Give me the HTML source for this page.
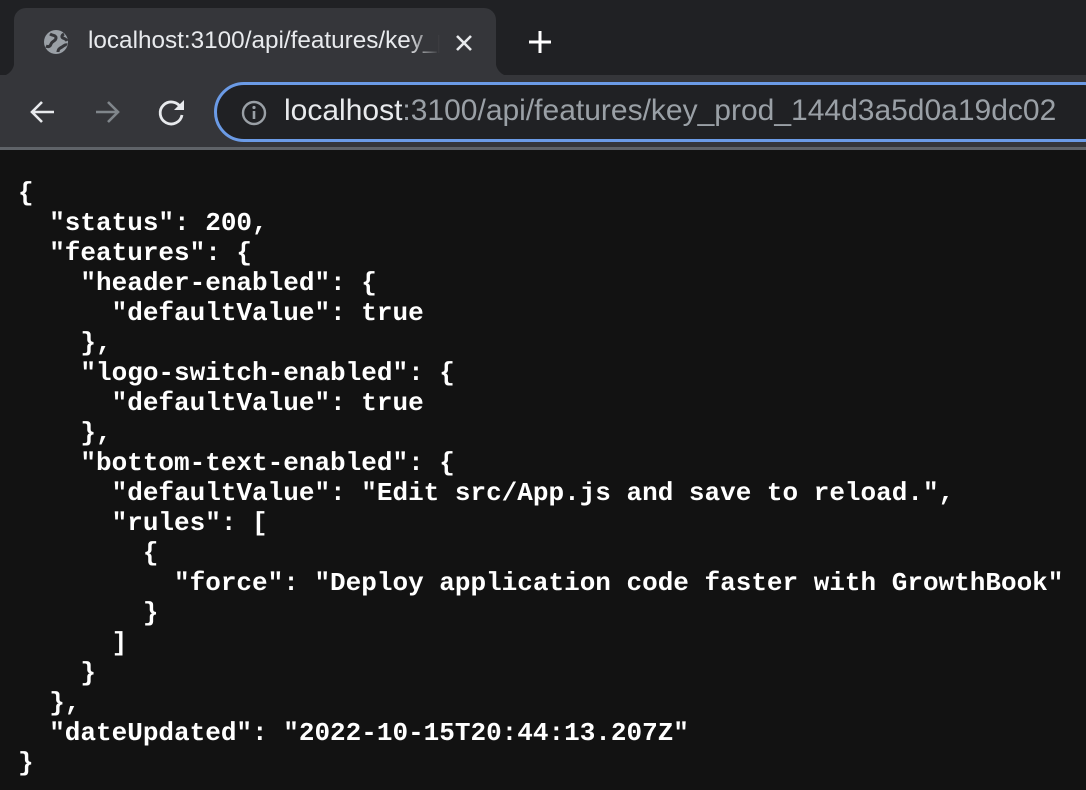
<!DOCTYPE html>
<html><head><meta charset="utf-8"><style>
*{margin:0;padding:0;box-sizing:border-box}
body{width:1086px;height:790px;overflow:hidden;background:#121212;position:relative;font-family:"Liberation Sans",sans-serif}
.top{position:absolute;left:0;top:0;width:1086px;height:75px;background:#202124}
.tab{position:absolute;left:14px;top:8px;width:482px;height:80px;background:#35363a;border-radius:12px 12px 0 0}
.tab:before{content:"";position:absolute;left:-14px;bottom:12px;width:14px;height:14px;background:radial-gradient(circle at 0 0,#202124 14px,#35363a 14.5px)}
.tab:after{content:"";position:absolute;right:-14px;bottom:12px;width:14px;height:14px;background:radial-gradient(circle at 100% 0,#202124 14px,#35363a 14.5px)}
.title{position:absolute;left:88px;top:27px;font-size:24.3px;color:#e8eaed;white-space:nowrap;width:352px;overflow:hidden;-webkit-mask-image:linear-gradient(90deg,#000 320px,transparent 352px)}
.bar{position:absolute;left:0;top:75px;width:1086px;height:73px;background:#35363a}
.line{position:absolute;left:0;top:147px;width:1086px;height:3px;background:#5f6368}
.omni{position:absolute;left:214px;top:82px;width:900px;height:60px;border:3px solid #6b9be6;border-radius:30px;background:#202124}
.url{position:absolute;left:284px;top:94px;font-size:30px;color:#e8eaed;white-space:nowrap}
.url span{color:#9aa0a6}
pre{position:absolute;left:18px;top:178px;font-family:"Liberation Mono",monospace;font-weight:bold;font-size:26px;line-height:30px;color:#ffffff}
</style></head><body>
<div class="top"></div>
<div class="tab"></div>
<svg style="position:absolute;left:42px;top:28px" width="28" height="28" viewBox="0 0 28 28"><circle cx="14" cy="14" r="12" fill="#9aa0a6"/><path d="M8 6c3 2 6 1 6 4s-4 3-5 6-3 3-5 2M16 24c0-3 2-4 4-5s3-3 5-2M22 6c-2 1-3 3-1 4s3 1 4 3" stroke="#35363a" stroke-width="3" fill="none"/></svg>
<div class="title">localhost:3100/api/features/key_prod_144d3a5d0a19dc02</div>
<svg style="position:absolute;left:453px;top:32px" width="22" height="22"><path d="M4 4L18 18M18 4L4 18" stroke="#e8eaed" stroke-width="2.6"/></svg>
<svg style="position:absolute;left:526px;top:28px" width="28" height="28"><path d="M14 3V25M3 14H25" stroke="#fff" stroke-width="3"/></svg>
<div class="bar"></div>
<div class="line"></div>
<svg style="position:absolute;left:28px;top:97px" width="30" height="30"><path d="M26 15H5M14 5L4 15L14 25" stroke="#e8eaed" stroke-width="2.6" fill="none"/></svg>
<svg style="position:absolute;left:92px;top:97px" width="30" height="30"><path d="M4 15H25M16 5L26 15L16 25" stroke="#80868b" stroke-width="2.6" fill="none"/></svg>
<svg style="position:absolute;left:157px;top:97px" width="30" height="30"><path d="M24 11A11 11 0 1 0 25 18" stroke="#e8eaed" stroke-width="2.8" fill="none"/><path d="M27 3V13H17Z" fill="#e8eaed"/></svg>
<div class="omni"></div>
<svg style="position:absolute;left:240px;top:99px" width="28" height="28"><circle cx="14" cy="14" r="11" stroke="#9aa0a6" stroke-width="2.4" fill="none"/><path d="M14 12V20" stroke="#9aa0a6" stroke-width="2.6"/><circle cx="14" cy="8.5" r="1.6" fill="#9aa0a6"/></svg>
<div class="url">localhost<span>:3100/api/features/key_prod_144d3a5d0a19dc02</span></div>
<pre>{
  "status": 200,
  "features": {
    "header-enabled": {
      "defaultValue": true
    },
    "logo-switch-enabled": {
      "defaultValue": true
    },
    "bottom-text-enabled": {
      "defaultValue": "Edit src/App.js and save to reload.",
      "rules": [
        {
          "force": "Deploy application code faster with GrowthBook"
        }
      ]
    }
  },
  "dateUpdated": "2022-10-15T20:44:13.207Z"
}</pre>
</body></html>
